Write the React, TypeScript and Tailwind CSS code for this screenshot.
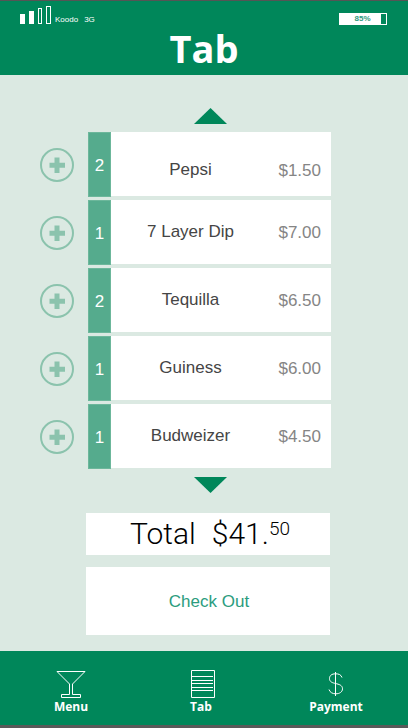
import type { ReactNode } from "react";

type Item = { qty: number; name: string; price: string; low?: boolean };

const items: Item[] = [
  { qty: 2, name: "Pepsi", price: "$1.50", low: true },
  { qty: 1, name: "7 Layer Dip", price: "$7.00" },
  { qty: 2, name: "Tequilla", price: "$6.50" },
  { qty: 1, name: "Guiness", price: "$6.00" },
  { qty: 1, name: "Budweizer", price: "$4.50" },
];

const sans = "font-['Liberation_Sans',Arial,sans-serif]";
const display = "font-['Open_Sans',sans-serif]";

function StatusBar() {
  return (
    <div className="flex h-6 items-start justify-between pl-5 pr-[21px] text-white">
      <div className="flex h-[23px] items-end">
        <svg width="31" height="18" viewBox="0 0 31 18" aria-hidden="true">
          <rect x="0" y="8" width="5" height="10" fill="#fff" />
          <rect x="9" y="5" width="5" height="13" fill="#fff" />
          <rect x="18.5" y="2.5" width="3" height="15" fill="none" stroke="#fff" />
          <rect x="26.5" y="0.5" width="4" height="17" fill="none" stroke="#fff" />
        </svg>
        <span className="ml-1 text-[8px] leading-[8px]">Koodo</span>
        <span className="ml-[6px] text-[8px] leading-[8px]">3G</span>
      </div>
      <div className="mt-3 flex h-3 w-12 border border-white">
        <span className="flex-1 bg-white pl-1 text-center text-[8px] leading-[10px] font-bold text-[#2f9a80]">85%</span>
        <span className="w-[5px]" />
      </div>
    </div>
  );
}

function ScrollButton({ down = false }: { down?: boolean }) {
  return (
    <button
      type="button"
      aria-label={down ? "Scroll down" : "Scroll up"}
      className="ml-[50px] flex justify-center"
    >
      <svg width="33" height="16" viewBox="0 0 33 16" fill="#00875a" aria-hidden="true">
        <path d={down ? "M0 0H33L16.5 16Z" : "M0 16H33L16.5 0Z"} />
      </svg>
    </button>
  );
}

function TabRow({ item }: { item: Item }) {
  return (
    <li className="flex h-[65px] items-center">
      <button type="button" aria-label={`Add ${item.name}`} className="mr-[14px]">
        <svg width="34" height="34" viewBox="0 0 34 34" fill="none" aria-hidden="true">
          <circle cx="17" cy="17" r="16" stroke="#8bc3ad" strokeWidth="2" />
          <path d="M17 9.5V25M9.5 17.3H25" stroke="#8bc3ad" strokeWidth="5" />
        </svg>
      </button>
      <span className="flex h-full w-[23px] items-center justify-center border border-[#6cb79b] bg-[#55ab8d] pt-0.5 text-[17px] text-white">
        {item.qty}
      </span>
      <div
        className={`flex h-16 flex-1 items-center self-start bg-white pr-[10px] text-[17px] leading-5 ${item.low ? "pt-[14px]" : "pt-0.5"}`}
      >
        <span className="flex-1 pr-2 pb-0.5 text-center text-[#454545]">{item.name}</span>
        <span className="w-[43px] text-right text-[#858585]">{item.price}</span>
      </div>
    </li>
  );
}

function NavLink({ label, children }: { label: string; children: ReactNode }) {
  return (
    <a href="#" className="flex flex-col items-center text-white">
      <span className="flex h-7 items-end">{children}</span>
      <span className="text-[12px] leading-[18px] font-bold">{label}</span>
    </a>
  );
}

export default function App() {
  return (
    <div className={`flex min-h-screen flex-col border-t border-b-[3px] border-t-[#555] border-b-[#5a5a5a] bg-[#dbe9e2] ${sans}`}>
      <header className="h-[74px] bg-[#00875a]">
        <StatusBar />
        <h1 className={`text-center text-[38px] leading-[46px] font-bold text-white ${display}`}>Tab</h1>
      </header>

      <main className="flex flex-1 flex-col pt-[33px] pr-[77px] pb-4 pl-10">
        <ScrollButton />
        <ul className="my-2 flex flex-col gap-[3px]">
          {items.map((item) => (
            <TabRow key={item.name} item={item} />
          ))}
        </ul>
        <ScrollButton down />
        <div className="mt-5 mr-px ml-[46px] flex flex-col gap-3">
          <p className="flex h-[42px] items-start justify-center bg-white pl-1 font-['Roboto',sans-serif] text-[30px] leading-[42px] font-light text-black">
            <span>Total</span>
            <span className="ml-4">$41.</span>
            <sup className="top-0 text-[19px] leading-8">50</sup>
          </p>
          <button type="button" className="h-[68px] bg-white pt-0.5 pl-0.5 text-[17px] text-[#2b9c7e]">
            Check Out
          </button>
        </div>
      </main>

      <nav className={`grid h-[74px] grid-cols-[132fr_128fr_142fr] bg-[#00875a] pt-[19px] pr-px pl-[5px] ${display}`}>
        <NavLink label="Menu">
          <svg width="30" height="28" viewBox="0 0 30 28" fill="none" stroke="#fff" aria-hidden="true">
            <path d="M1 1.5H29L16.5 14V24.5H24.5V27.5H5.5V24.5H13.5V14Z" />
          </svg>
        </NavLink>
        <NavLink label="Tab">
          <svg width="28" height="28" viewBox="0 0 28 28" fill="none" stroke="#fff" aria-hidden="true">
            <path d="M4.5 0.5H27.5V27.5H4.5ZM5 6.5H26M5 10.5H26M5 13.5H26M5 17.5H26M5 20.5H26" />
          </svg>
        </NavLink>
        <NavLink label="Payment">
          <svg width="16" height="28" viewBox="0 0 16 28" fill="none" stroke="#fff" aria-hidden="true">
            <path d="M7.5 2V26M14 7.5C13 4.5 10.5 3.8 7.5 3.8C3.8 3.8 1.5 5.5 1.5 8.5C1.5 12 4.5 12.8 7.5 13.5C11 14.3 14.5 15.2 14.5 18.8C14.5 22 11.5 23.8 7.8 23.8C4.5 23.8 2 22.5 1 19.5" />
          </svg>
        </NavLink>
      </nav>
    </div>
  );
}
